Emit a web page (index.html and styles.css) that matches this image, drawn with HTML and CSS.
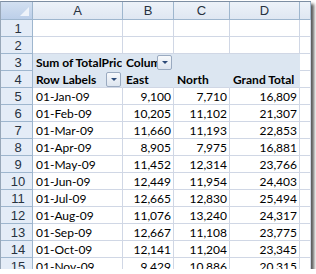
FILE: index.html
```html
<!DOCTYPE html>
<html lang="en">
<head>
    <meta charset="UTF-8">
    <title>Pivot table</title>
    <link rel="stylesheet" href="styles.css">
</head>
<body>
    <div class="sheet" id="sheet">
        <div class="corner"></div>
        <div class="col-head">A</div>
        <div class="col-head">B</div>
        <div class="col-head">C</div>
        <div class="col-head">D</div>
        <div class="col-head"></div>

        <div class="row-head">1</div>
        <div class="cell"></div><div class="cell"></div><div class="cell"></div><div class="cell"></div><div class="cell"></div>

        <div class="row-head">2</div>
        <div class="cell"></div><div class="cell"></div><div class="cell"></div><div class="cell"></div><div class="cell"></div>

        <div class="row-head">3</div>
        <div class="cell pivot bold">Sum of TotalPrice</div>
        <div class="cell pivot bold has-btn"><span class="clip">Column Labels</span><span class="drop"></span></div>
        <div class="cell pivot"></div>
        <div class="cell pivot"></div>
        <div class="cell"></div>

        <div class="row-head">4</div>
        <div class="cell pivot bold last has-btn"><span class="clip">Row Labels</span><span class="drop"></span></div>
        <div class="cell pivot bold last">East</div>
        <div class="cell pivot bold last">North</div>
        <div class="cell pivot bold last">Grand Total</div>
        <div class="cell"></div>
    </div>

    <script type="text/javascript">
        var data = [
            ['01-Jan-09', '9,100', '7,710', '16,809'],
            ['01-Feb-09', '10,205', '11,102', '21,307'],
            ['01-Mar-09', '11,660', '11,193', '22,853'],
            ['01-Apr-09', '8,905', '7,975', '16,881'],
            ['01-May-09', '11,452', '12,314', '23,766'],
            ['01-Jun-09', '12,449', '11,954', '24,403'],
            ['01-Jul-09', '12,665', '12,830', '25,494'],
            ['01-Aug-09', '11,076', '13,240', '24,317'],
            ['01-Sep-09', '12,667', '11,108', '23,775'],
            ['01-Oct-09', '12,141', '11,204', '23,345'],
            ['01-Nov-09', '9,429', '10,886', '20,315']
        ]

        var sheet = document.getElementById('sheet')
        for (var i = 0; i < data.length; i++) {
            var r = data[i]
            sheet.innerHTML += `<div class="row-head">${i + 5}</div>
                <div class="cell">${r[0]}</div>
                <div class="cell num">${r[1]}</div>
                <div class="cell num">${r[2]}</div>
                <div class="cell num">${r[3]}</div>
                <div class="cell"></div>`
        }
    </script>
</body>
</html>
```

FILE: styles.css
```css
body {
    margin: 0;
    background: #fff;
}

.sheet {
    display: grid;
    grid-template-columns: 32px 90px 51px 56px 70px 11px;
    grid-template-rows: 18px;
    grid-auto-rows: 17px;
    width: 311px;
    height: 268px;
    margin-top: 1px;
    overflow: hidden;
    background: #fff;
    border-top: 1px solid #7d8ea3;
    border-left: 1px solid #98a7b8;
    box-sizing: border-box;
    box-shadow: 3px 3px 3px rgba(0, 0, 0, 0.65);
}

.corner {
    position: relative;
    background: linear-gradient(#d3e0f1, #bccfe9);
    border-right: 1px solid #9eb6ce;
    border-bottom: 1px solid #9eb6ce;
}

.corner::after {
    content: "";
    position: absolute;
    right: 3px;
    bottom: 3px;
    width: 9px;
    height: 9px;
    background: #eef3fa;
    clip-path: polygon(100% 0, 100% 100%, 0 100%);
}

.col-head {
    background: linear-gradient(#edf2f9, #dfe7f2);
    border-right: 1px solid #9eb6ce;
    border-bottom: 1px solid #9eb6ce;
    font: 13px "Liberation Sans", Arial, sans-serif;
    color: #27323f;
    text-align: center;
    line-height: 17px;
}

.row-head {
    background: #e4ecf7;
    border-right: 1px solid #9eb6ce;
    border-bottom: 1px solid #9eb6ce;
    font: 13px "Liberation Sans", Arial, sans-serif;
    color: #27323f;
    text-align: center;
    padding-left: 3px;
    line-height: 17px;
}

.cell {
    box-sizing: border-box;
    border-right: 1px solid #d0d7e5;
    border-bottom: 1px solid #d0d7e5;
    padding: 0 2px 0 3px;
    font: 12px Lato, "Liberation Sans", sans-serif;
    color: #000;
    line-height: 17px;
    white-space: nowrap;
    overflow: hidden;
}

.num {
    text-align: right;
}

.pivot {
    background: #dce6f1;
    border-right-color: #dce6f1;
    border-bottom-color: #dce6f1;
}

.pivot.last {
    border-bottom-color: #d0d7e5;
}

.bold {
    font-weight: bold;
}

.has-btn {
    display: flex;
    align-items: center;
    padding-right: 1px;
}

.clip {
    flex: 1;
    overflow: hidden;
}

.drop {
    flex: none;
    width: 15px;
    height: 15px;
    box-sizing: border-box;
    border: 1px solid #9aaac0;
    border-radius: 2px;
    background: linear-gradient(#f7f9fc, #dde5ef);
    display: flex;
    align-items: center;
    justify-content: center;
}

.drop::after {
    content: "";
    border-left: 3px solid transparent;
    border-right: 3px solid transparent;
    border-top: 3px solid #2c4a78;
}
```
